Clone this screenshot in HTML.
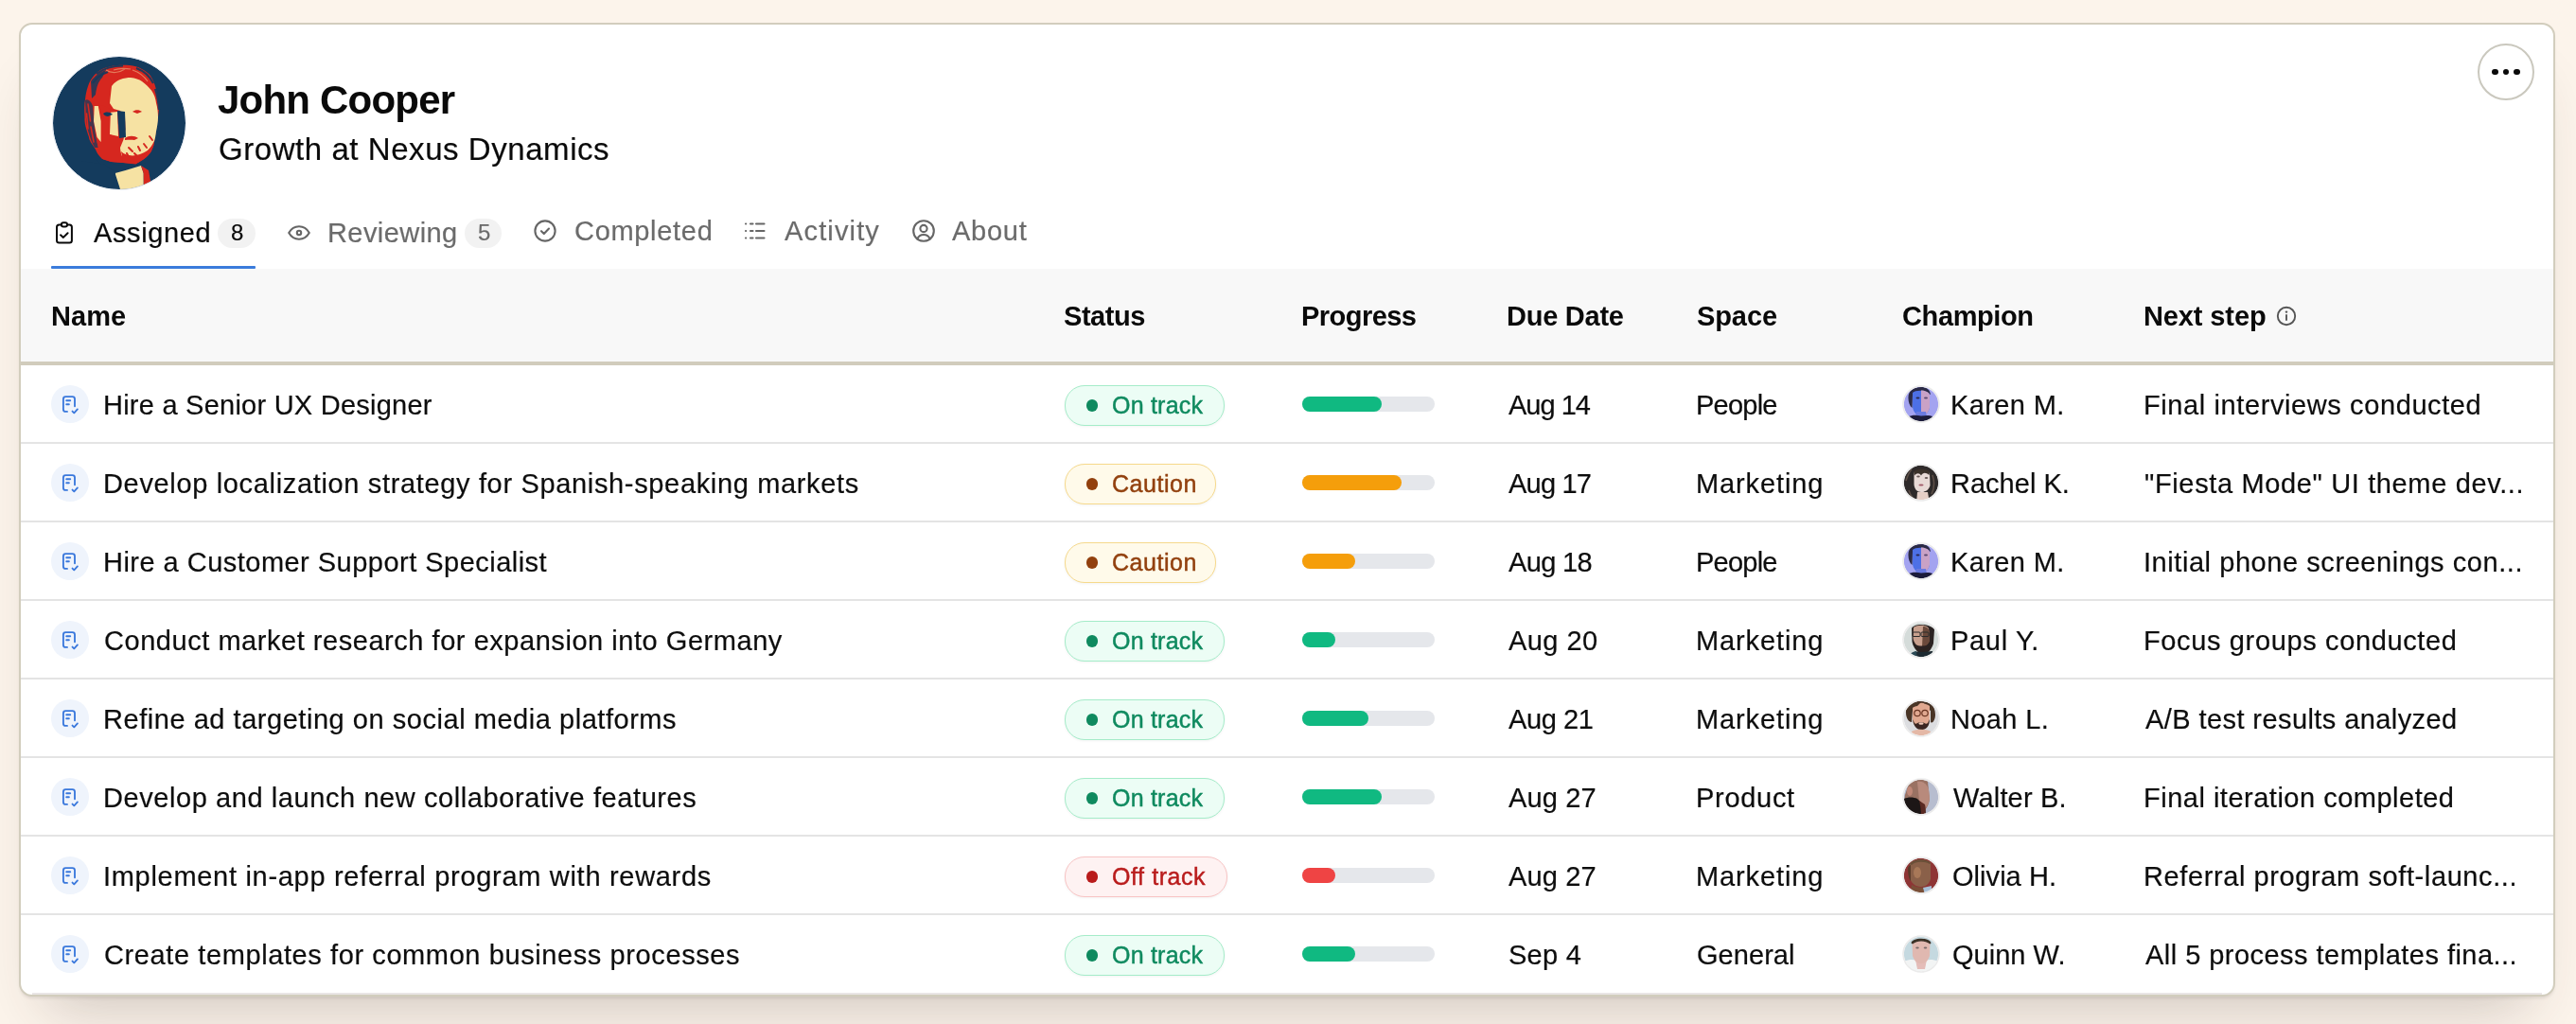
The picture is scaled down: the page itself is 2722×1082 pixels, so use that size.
<!DOCTYPE html>
<html><head><meta charset="utf-8"><style>
html,body{margin:0;padding:0;}
body{width:2722px;height:1082px;overflow:hidden;position:relative;background:#fcf4eb;font-family:"Liberation Sans",sans-serif;}
.card{position:absolute;left:20px;top:24px;width:2676px;height:1024.5px;border:2px solid #d2cdbd;border-radius:14px;background:#fff;box-shadow:0 40px 60px -30px rgba(60,40,40,0.24), 0 3px 3px -1px rgba(60,50,45,0.10);}
.t{position:absolute;white-space:nowrap;line-height:1;font-family:"Liberation Sans",sans-serif;-webkit-text-stroke:0.2px currentColor;will-change:transform;}
svg{overflow:visible;}
</style></head><body>
<div class="card"></div>
<svg style="position:absolute;left:56.00px;top:60.00px;" width="140" height="140" viewBox="0 0 140 140">
<defs><clipPath id="cav"><circle cx="70" cy="70" r="70"/></clipPath></defs>
<g clip-path="url(#cav)">
<rect width="140" height="140" fill="#143b5d"/>
<path d="M37 31 C40 22 46 16 52 13 C60 9 72 8 81 9 C90 10 98 14 103 20 C108 27 111 40 112 55 L111 64 L106.6 93 C104 100 100 105 98 106.6 L87.5 113.5 L74 112 L61.5 111 L52 108 C48 104 46 101 45 98 C41 92 38 88 38 85 C35 76 33 70 33.5 64 C33 56 33 50 34 45 C34.5 40 35.5 35 37 31 Z" fill="#d6271f"/>
<path d="M40 26 C44 20 50 16 56 14 L52 22 C48 26 46 32 45 40 L41 44 Z" fill="#143b5d" opacity="0.85"/>
<path d="M34 46 C36 44 40 46 42 52 L43.5 70 C44 80 46 88 48 96 L44 96 C40 88 36 78 35 66 Z" fill="#143b5d" opacity="0.75"/>
<path d="M37 50 L39.5 68 M40 74 L43 90 M35.5 60 L37 76" stroke="#d6271f" stroke-width="1.6" stroke-linecap="round"/>
<path d="M62 31 C65 27 68 25 71 24 C75 22.5 79 22 82 22 C87 22.5 91 24 94 26 C98 29 101 32 104 35.5 C107 40 108.5 44 109 49 C110.5 54 111 59 111 64 C111 69 110 74 109 79 C108.5 83 108 86 107 89 C105 93 103 96 101 98 C99 101 96.5 103 94 105 C91 107 88 108.5 85 109 C82 109 79.5 108.8 77 108 C75 107 73 105.5 72 104 C71 101 70.5 98 71 96 L74.5 87.5 L76.5 76.5 L76 64 L71 57 L64 55 L60 49 L61 40 Z" fill="#f6e2a3"/>
<path d="M59 59 L68 58 L69 84 L60 82 Z" fill="#f6e2a3"/>
<path d="M68 57 L76 58 L77 85 L70 86 Z" fill="#143b5d"/>
<path d="M45 52 C50 50 56 52 61 56 L60 82 L70 86 C71 95 71 100 73 106 L74 112 L61.5 111 L52 108 C48 100 46 90 45.5 80 C45 70 45 60 45 52 Z" fill="#d6271f"/>
<path d="M43.7 52 L47.8 52 L50.6 68 L50.6 90 L46.5 85 L43 68 Z" fill="#f6e2a3"/>
<path d="M53 60 C56 58 60 58 63 61 L58 63 C56 63 54 62 53 60 Z" fill="#143b5d"/>
<path d="M84 58 C87 55.5 91 55.5 94 58 L89 60 Z" fill="#d6271f"/>
<path d="M76 86 C80 83 86 83 90 86 L86 88 C83 87.5 80 87.5 76 88 Z" fill="#d6271f"/>
<path d="M72 100 C78 106 90 106 100 99 L106.6 93 L104 100 C100 106 92 112 86 113 L74 112 Z" fill="#d6271f"/>
<path d="M45 102.5 C52 110 62 114 74 115 C84 116 92 115 98 112 L98 118 C90 121 80 122 70 121 C58 120 50 114 45 108 Z" fill="#143b5d"/>
<path d="M65.6 123 L76.6 120 L93 115 L95.7 123 L95.7 140 L71 140 Z" fill="#f6e2a3"/>
<path d="M93 115 L101 120 L104 137 L96 140 L95.7 123 Z" fill="#d6271f"/>
<path d="M55 114 C60 118 64 121 66 123 L62 140 L30 140 L30 110 Z" fill="#143b5d"/>
<path d="M80 96 L84 100 M90 95 L92 99 M96 92 L99 96 M86 102 L89 105 M78 102 L80 106 M102 84 L105 88" stroke="#d6271f" stroke-width="2" stroke-linecap="round"/>
<path d="M46 18 C54 12 64 9.5 74 9.5 M88 12 C96 15 102 20 106 28 M42 28 C46 22 52 18 58 16 M108 34 C110 40 111.5 48 112 56" stroke="#143b5d" stroke-width="2.2" fill="none" opacity="0.9"/>
<path d="M56 14 C62 18 70 17 76 13 M84 14 C90 16 96 20 100 26 M64 14 C70 12 76 12 82 13" stroke="#f6e2a3" stroke-width="1.2" opacity="0.45" fill="none"/>
</g>

</svg>
<div style="position:absolute;left:55.00px;top:59.00px;width:142.00px;height:142.00px;box-sizing:border-box;border:1.5px solid #e3e8ef;border-radius:50%;"></div>
<div class="t" style="left:230.45px;top:84.85px;font-size:42px;letter-spacing:-0.790px;color:#0a0a0a;font-weight:700;-webkit-text-stroke:0;">John Cooper</div>
<div class="t" style="left:230.52px;top:140.82px;font-size:33px;letter-spacing:0.556px;color:#0a0a0a;">Growth at Nexus Dynamics</div>
<div style="position:absolute;left:2618.00px;top:46.00px;width:60.00px;height:60.00px;box-sizing:border-box;border:2px solid #cac8be;border-radius:50%;background:#fff;"></div>
<div style="position:absolute;left:2633.00px;top:72.50px;width:6.60px;height:6.60px;border-radius:50%;background:#0a0a0a;"></div>
<div style="position:absolute;left:2644.70px;top:72.50px;width:6.60px;height:6.60px;border-radius:50%;background:#0a0a0a;"></div>
<div style="position:absolute;left:2656.40px;top:72.50px;width:6.60px;height:6.60px;border-radius:50%;background:#0a0a0a;"></div>
<svg style="position:absolute;left:50.00px;top:220.00px;" width="60" height="50" viewBox="0 0 60 50"><g fill="none" stroke="#0a0a0a" stroke-width="2" stroke-linecap="round" stroke-linejoin="round">
<path d="M14.9 17.6 H12.5 a2.5 2.5 0 0 0 -2.5 2.5 V34.1 a2.5 2.5 0 0 0 2.5 2.5 H23.4 a2.5 2.5 0 0 0 2.5 -2.5 V20.1 a2.5 2.5 0 0 0 -2.5 -2.5 H21"/>
<rect x="14.9" y="15.2" width="6.1" height="4.3" rx="2"/>
<path d="M14 28.3 L16.9 30.9 L21.6 26.2"/></g></svg>
<div class="t" style="left:99.12px;top:231.75px;font-size:29px;letter-spacing:0.631px;color:#0a0a0a;">Assigned</div>
<div style="position:absolute;left:230.20px;top:231.00px;width:39.50px;height:30.70px;border-radius:16px;background:#f2f2f2;"></div>
<div class="t" style="left:244.20px;top:233.68px;font-size:24px;letter-spacing:0.000px;color:#0a0a0a;">8</div>
<svg style="position:absolute;left:302.00px;top:235.20px;" width="28" height="22" viewBox="0 0 28 22"><g fill="none" stroke="#666" stroke-width="2.1" stroke-linecap="round" stroke-linejoin="round">
<path d="M3.2 11 C6 6.2 10 4.3 14 4.3 C18 4.3 22 6.2 24.8 11 C22 15.8 18 17.7 14 17.7 C10 17.7 6 15.8 3.2 11 Z"/>
<circle cx="14" cy="11" r="2.2"/></g></svg>
<div class="t" style="left:345.60px;top:231.75px;font-size:29px;letter-spacing:0.430px;color:#6b6b6b;">Reviewing</div>
<div style="position:absolute;left:490.80px;top:231.00px;width:39.00px;height:30.70px;border-radius:16px;background:#f2f2f2;"></div>
<div class="t" style="left:504.50px;top:233.68px;font-size:24px;letter-spacing:0.000px;color:#6b6b6b;">5</div>
<svg style="position:absolute;left:562.00px;top:230.00px;" width="28" height="28" viewBox="0 0 28 28"><g fill="none" stroke="#666" stroke-width="2.1" stroke-linecap="round" stroke-linejoin="round">
<circle cx="14" cy="14" r="10.6"/><path d="M10 14.2 L12.8 17 L18 11.6"/></g></svg>
<div class="t" style="left:606.76px;top:229.55px;font-size:29px;letter-spacing:0.690px;color:#6b6b6b;">Completed</div>
<svg style="position:absolute;left:785.00px;top:233.00px;" width="26" height="22" viewBox="0 0 26 22"><g fill="none" stroke="#666" stroke-width="2.1" stroke-linecap="round">
<path d="M3 3.5 h0.2 M8 3.5 h2.5 M14 3.5 h8.5"/>
<path d="M3 11 h0.2 M8 11 h2.5 M14 11 h8.5"/>
<path d="M3 18.5 h0.2 M8 18.5 h2.5 M14 18.5 h8.5"/></g></svg>
<div class="t" style="left:828.78px;top:229.55px;font-size:29px;letter-spacing:1.143px;color:#6b6b6b;">Activity</div>
<svg style="position:absolute;left:962.00px;top:230.00px;" width="28" height="28" viewBox="0 0 28 28"><g fill="none" stroke="#666" stroke-width="2.1" stroke-linecap="round" stroke-linejoin="round">
<circle cx="14" cy="14" r="10.8"/><circle cx="14" cy="11.5" r="3.6"/><path d="M7.2 22.5 C8.5 19.5 11 18 14 18 C17 18 19.5 19.5 20.8 22.5"/></g></svg>
<div class="t" style="left:1006.44px;top:229.55px;font-size:29px;letter-spacing:0.725px;color:#6b6b6b;">About</div>
<div style="position:absolute;left:54.00px;top:281.00px;width:216.00px;height:3.20px;background:#3b7cdc;border-radius:1px;"></div>
<div style="position:absolute;left:22.00px;top:284.00px;width:2676.00px;height:98.00px;background:#f8f8f8;"></div>
<div style="position:absolute;left:22.00px;top:382.00px;width:2676.00px;height:4.00px;background:#d1ccbc;"></div>
<div class="t" style="left:54.00px;top:320.25px;font-size:29px;letter-spacing:0.067px;color:#0a0a0a;font-weight:700;-webkit-text-stroke:0;">Name</div>
<div class="t" style="left:1124.10px;top:320.25px;font-size:29px;letter-spacing:-0.460px;color:#0a0a0a;font-weight:700;-webkit-text-stroke:0;">Status</div>
<div class="t" style="left:1375.40px;top:320.25px;font-size:29px;letter-spacing:-0.543px;color:#0a0a0a;font-weight:700;-webkit-text-stroke:0;">Progress</div>
<div class="t" style="left:1592.40px;top:320.25px;font-size:29px;letter-spacing:-0.243px;color:#0a0a0a;font-weight:700;-webkit-text-stroke:0;">Due Date</div>
<div class="t" style="left:1792.70px;top:320.25px;font-size:29px;letter-spacing:-0.100px;color:#0a0a0a;font-weight:700;-webkit-text-stroke:0;">Space</div>
<div class="t" style="left:2010.20px;top:320.25px;font-size:29px;letter-spacing:-0.386px;color:#0a0a0a;font-weight:700;-webkit-text-stroke:0;">Champion</div>
<div class="t" style="left:2265.40px;top:320.25px;font-size:29px;letter-spacing:-0.112px;color:#0a0a0a;font-weight:700;-webkit-text-stroke:0;">Next step</div>
<svg style="position:absolute;left:2404.00px;top:322.00px;" width="24" height="24" viewBox="0 0 24 24"><g fill="none" stroke="#555" stroke-width="1.9" stroke-linecap="round">
<circle cx="12" cy="12" r="9.2"/><path d="M12 11 V16"/><path d="M12 7.6 h0.01" stroke-width="2.4"/></g></svg>
<div style="position:absolute;left:22.00px;top:467.00px;width:2676.00px;height:2.00px;background:#e4e4e4;"></div>
<div style="position:absolute;left:54.00px;top:406.80px;width:40.00px;height:40.00px;border-radius:50%;background:#eff4fc;"></div>
<svg style="position:absolute;left:60.00px;top:411.80px;" width="30" height="30" viewBox="0 0 30 30"><g fill="none" stroke="#3a78dc" stroke-width="1.85" stroke-linecap="round" stroke-linejoin="round">
<path d="M11 22.9 H9.4 a2.5 2.5 0 0 1 -2.5 -2.5 V9.6 a2.5 2.5 0 0 1 2.5 -2.5 H16.5 a2.5 2.5 0 0 1 2.5 2.5 V17.2"/>
<path d="M10.2 11.2 H14.2"/><path d="M10.2 15.2 H12.9"/><path d="M16.5 22.6 L18.3 24.3 L21.9 20.4"/></g></svg>
<div class="t" style="left:108.72px;top:413.75px;font-size:29px;letter-spacing:0.241px;color:#0d0d0d;">Hire a Senior UX Designer</div>
<div style="position:absolute;left:1124.50px;top:407.30px;width:169.00px;height:43.00px;box-sizing:border-box;border:1.6px solid #a5ecc9;border-radius:21px;background:#ecfdf5;box-shadow:0 1px 3px rgba(0,0,0,0.05);"></div>
<div style="position:absolute;left:1147.70px;top:422.20px;width:12.80px;height:12.80px;border-radius:50%;background:#0f8a5f;"></div>
<div class="t" style="left:1174.70px;top:415.74px;font-size:25px;letter-spacing:0.220px;color:#0f8a5f;-webkit-text-stroke:0.45px currentColor;">On track</div>
<div style="position:absolute;left:1376.00px;top:418.80px;width:140.00px;height:16.00px;border-radius:8px;background:#e5e7eb;"></div>
<div style="position:absolute;left:1376.00px;top:418.80px;width:84.00px;height:16.00px;border-radius:8px;background:#10b981;"></div>
<div class="t" style="left:1594.44px;top:413.75px;font-size:29px;letter-spacing:-0.988px;color:#0d0d0d;">Aug 14</div>
<div class="t" style="left:1791.60px;top:413.75px;font-size:29px;letter-spacing:-0.760px;color:#0d0d0d;">People</div>
<svg style="position:absolute;left:2008.00px;top:404.80px;" width="44" height="44" viewBox="0 0 44 44"><defs><clipPath id="ca0"><circle cx="22" cy="22" r="18.2"/></clipPath><filter id="fb0" x="-10%" y="-10%" width="120%" height="120%"><feGaussianBlur stdDeviation="0.55"/></filter></defs><g clip-path="url(#ca0)"><g filter="url(#fb0)"><rect width="44" height="44" fill="#a3a3f0"/>
<path d="M8.5 16 C8 8 14 4 22 4 C28 4 31.5 7 32 12 L30 11 C26 8 16 8 13 12 L12.5 26 C10 24 8.5 20 8.5 16 Z" fill="#2b2a45"/>
<path d="M13 10 C16 7 26 6.5 31 11 L31 26 C30 31 26 34 22 34 C17 34 13.5 30 13 25 Z" fill="#4d6fe6"/>
<path d="M22 7.5 C26 7.5 30 9 31 12 L31 26 C30 31 26 34 22 34 Z" fill="#c9a2c6"/>
<path d="M17 30 L27 30 L28 36 L16 36 Z" fill="#6a7ae0"/>
<ellipse cx="18.5" cy="15.5" rx="2" ry="1" fill="#2a2a50"/><ellipse cx="27" cy="15.5" rx="2" ry="1" fill="#5a4a70"/>
<path d="M8 35.5 C12 33.5 17 33.5 22 34.5 C27 34 31 33.5 35 35.5 L35 44 L8 44 Z" fill="#1e1c3a"/></g></g><circle cx="22" cy="22" r="19" fill="none" stroke="#ebebeb" stroke-width="1.6"/></svg>
<div class="t" style="left:2061.16px;top:413.75px;font-size:29px;letter-spacing:0.374px;color:#0d0d0d;">Karen M.</div>
<div class="t" style="left:2264.60px;top:413.75px;font-size:29px;letter-spacing:0.600px;color:#0d0d0d;">Final interviews conducted</div>
<div style="position:absolute;left:22.00px;top:550.00px;width:2676.00px;height:2.00px;background:#e4e4e4;"></div>
<div style="position:absolute;left:54.00px;top:489.80px;width:40.00px;height:40.00px;border-radius:50%;background:#eff4fc;"></div>
<svg style="position:absolute;left:60.00px;top:494.80px;" width="30" height="30" viewBox="0 0 30 30"><g fill="none" stroke="#3a78dc" stroke-width="1.85" stroke-linecap="round" stroke-linejoin="round">
<path d="M11 22.9 H9.4 a2.5 2.5 0 0 1 -2.5 -2.5 V9.6 a2.5 2.5 0 0 1 2.5 -2.5 H16.5 a2.5 2.5 0 0 1 2.5 2.5 V17.2"/>
<path d="M10.2 11.2 H14.2"/><path d="M10.2 15.2 H12.9"/><path d="M16.5 22.6 L18.3 24.3 L21.9 20.4"/></g></svg>
<div class="t" style="left:108.72px;top:496.75px;font-size:29px;letter-spacing:0.657px;color:#0d0d0d;">Develop localization strategy for Spanish-speaking markets</div>
<div style="position:absolute;left:1124.50px;top:490.30px;width:160.60px;height:43.00px;box-sizing:border-box;border:1.6px solid #f6d98c;border-radius:21px;background:#fffaea;box-shadow:0 1px 3px rgba(0,0,0,0.05);"></div>
<div style="position:absolute;left:1147.70px;top:505.20px;width:12.80px;height:12.80px;border-radius:50%;background:#92400e;"></div>
<div class="t" style="left:1174.70px;top:498.74px;font-size:25px;letter-spacing:0.537px;color:#92400e;-webkit-text-stroke:0.45px currentColor;">Caution</div>
<div style="position:absolute;left:1376.00px;top:501.80px;width:140.00px;height:16.00px;border-radius:8px;background:#e5e7eb;"></div>
<div style="position:absolute;left:1376.00px;top:501.80px;width:105.00px;height:16.00px;border-radius:8px;background:#f59e0b;"></div>
<div class="t" style="left:1594.44px;top:496.75px;font-size:29px;letter-spacing:-0.792px;color:#0d0d0d;">Aug 17</div>
<div class="t" style="left:1791.60px;top:496.75px;font-size:29px;letter-spacing:0.885px;color:#0d0d0d;">Marketing</div>
<svg style="position:absolute;left:2008.00px;top:487.80px;" width="44" height="44" viewBox="0 0 44 44"><defs><clipPath id="ca1"><circle cx="22" cy="22" r="18.2"/></clipPath><filter id="fb1" x="-10%" y="-10%" width="120%" height="120%"><feGaussianBlur stdDeviation="0.55"/></filter></defs><g clip-path="url(#ca1)"><g filter="url(#fb1)"><rect width="44" height="44" fill="#2f2b29"/>
<path d="M6 20 C8 14 10 10 12 8 M34 14 C36 20 36 28 33 34 M9 30 C10 34 12 37 14 39" stroke="#5e5048" stroke-width="1.5" fill="none"/>
<path d="M14.5 11 C16 8.5 28 8.5 31 12 L31.5 25 C30 30 26 32 22 32 C18 32 15 29 14.5 24 Z" fill="#e8dad6"/>
<path d="M14 10 C18 6.5 26 6.5 31 10 L30.5 14 C27 11 24 11 22 14.5 C20 11 17 12 15 14.5 Z" fill="#3a302c"/>
<ellipse cx="22" cy="24.5" rx="2.6" ry="1.1" fill="#a05a68"/>
<ellipse cx="19" cy="15.5" rx="1.8" ry="0.9" fill="#6a5a58"/><ellipse cx="27.5" cy="17" rx="1.8" ry="0.9" fill="#6a5a58"/>
<path d="M18 32 L29 32 L31 44 L17 44 Z" fill="#e5cfc6"/></g></g><circle cx="22" cy="22" r="19" fill="none" stroke="#ebebeb" stroke-width="1.6"/></svg>
<div class="t" style="left:2061.16px;top:496.75px;font-size:29px;letter-spacing:0.015px;color:#0d0d0d;">Rachel K.</div>
<div class="t" style="left:2266.20px;top:496.75px;font-size:29px;letter-spacing:0.639px;color:#0d0d0d;">&quot;Fiesta Mode&quot; UI theme dev...</div>
<div style="position:absolute;left:22.00px;top:633.00px;width:2676.00px;height:2.00px;background:#e4e4e4;"></div>
<div style="position:absolute;left:54.00px;top:572.80px;width:40.00px;height:40.00px;border-radius:50%;background:#eff4fc;"></div>
<svg style="position:absolute;left:60.00px;top:577.80px;" width="30" height="30" viewBox="0 0 30 30"><g fill="none" stroke="#3a78dc" stroke-width="1.85" stroke-linecap="round" stroke-linejoin="round">
<path d="M11 22.9 H9.4 a2.5 2.5 0 0 1 -2.5 -2.5 V9.6 a2.5 2.5 0 0 1 2.5 -2.5 H16.5 a2.5 2.5 0 0 1 2.5 2.5 V17.2"/>
<path d="M10.2 11.2 H14.2"/><path d="M10.2 15.2 H12.9"/><path d="M16.5 22.6 L18.3 24.3 L21.9 20.4"/></g></svg>
<div class="t" style="left:108.72px;top:579.75px;font-size:29px;letter-spacing:0.476px;color:#0d0d0d;">Hire a Customer Support Specialist</div>
<div style="position:absolute;left:1124.50px;top:573.30px;width:160.60px;height:43.00px;box-sizing:border-box;border:1.6px solid #f6d98c;border-radius:21px;background:#fffaea;box-shadow:0 1px 3px rgba(0,0,0,0.05);"></div>
<div style="position:absolute;left:1147.70px;top:588.20px;width:12.80px;height:12.80px;border-radius:50%;background:#92400e;"></div>
<div class="t" style="left:1174.70px;top:581.74px;font-size:25px;letter-spacing:0.537px;color:#92400e;-webkit-text-stroke:0.45px currentColor;">Caution</div>
<div style="position:absolute;left:1376.00px;top:584.80px;width:140.00px;height:16.00px;border-radius:8px;background:#e5e7eb;"></div>
<div style="position:absolute;left:1376.00px;top:584.80px;width:56.00px;height:16.00px;border-radius:8px;background:#f59e0b;"></div>
<div class="t" style="left:1594.44px;top:579.75px;font-size:29px;letter-spacing:-0.640px;color:#0d0d0d;">Aug 18</div>
<div class="t" style="left:1791.60px;top:579.75px;font-size:29px;letter-spacing:-0.760px;color:#0d0d0d;">People</div>
<svg style="position:absolute;left:2008.00px;top:570.80px;" width="44" height="44" viewBox="0 0 44 44"><defs><clipPath id="ca2"><circle cx="22" cy="22" r="18.2"/></clipPath><filter id="fb2" x="-10%" y="-10%" width="120%" height="120%"><feGaussianBlur stdDeviation="0.55"/></filter></defs><g clip-path="url(#ca2)"><g filter="url(#fb2)"><rect width="44" height="44" fill="#a3a3f0"/>
<path d="M8.5 16 C8 8 14 4 22 4 C28 4 31.5 7 32 12 L30 11 C26 8 16 8 13 12 L12.5 26 C10 24 8.5 20 8.5 16 Z" fill="#2b2a45"/>
<path d="M13 10 C16 7 26 6.5 31 11 L31 26 C30 31 26 34 22 34 C17 34 13.5 30 13 25 Z" fill="#4d6fe6"/>
<path d="M22 7.5 C26 7.5 30 9 31 12 L31 26 C30 31 26 34 22 34 Z" fill="#c9a2c6"/>
<path d="M17 30 L27 30 L28 36 L16 36 Z" fill="#6a7ae0"/>
<ellipse cx="18.5" cy="15.5" rx="2" ry="1" fill="#2a2a50"/><ellipse cx="27" cy="15.5" rx="2" ry="1" fill="#5a4a70"/>
<path d="M8 35.5 C12 33.5 17 33.5 22 34.5 C27 34 31 33.5 35 35.5 L35 44 L8 44 Z" fill="#1e1c3a"/></g></g><circle cx="22" cy="22" r="19" fill="none" stroke="#ebebeb" stroke-width="1.6"/></svg>
<div class="t" style="left:2061.16px;top:579.75px;font-size:29px;letter-spacing:0.374px;color:#0d0d0d;">Karen M.</div>
<div class="t" style="left:2264.60px;top:579.75px;font-size:29px;letter-spacing:0.560px;color:#0d0d0d;">Initial phone screenings con...</div>
<div style="position:absolute;left:22.00px;top:716.00px;width:2676.00px;height:2.00px;background:#e4e4e4;"></div>
<div style="position:absolute;left:54.00px;top:655.80px;width:40.00px;height:40.00px;border-radius:50%;background:#eff4fc;"></div>
<svg style="position:absolute;left:60.00px;top:660.80px;" width="30" height="30" viewBox="0 0 30 30"><g fill="none" stroke="#3a78dc" stroke-width="1.85" stroke-linecap="round" stroke-linejoin="round">
<path d="M11 22.9 H9.4 a2.5 2.5 0 0 1 -2.5 -2.5 V9.6 a2.5 2.5 0 0 1 2.5 -2.5 H16.5 a2.5 2.5 0 0 1 2.5 2.5 V17.2"/>
<path d="M10.2 11.2 H14.2"/><path d="M10.2 15.2 H12.9"/><path d="M16.5 22.6 L18.3 24.3 L21.9 20.4"/></g></svg>
<div class="t" style="left:109.52px;top:662.75px;font-size:29px;letter-spacing:0.540px;color:#0d0d0d;">Conduct market research for expansion into Germany</div>
<div style="position:absolute;left:1124.50px;top:656.30px;width:169.00px;height:43.00px;box-sizing:border-box;border:1.6px solid #a5ecc9;border-radius:21px;background:#ecfdf5;box-shadow:0 1px 3px rgba(0,0,0,0.05);"></div>
<div style="position:absolute;left:1147.70px;top:671.20px;width:12.80px;height:12.80px;border-radius:50%;background:#0f8a5f;"></div>
<div class="t" style="left:1174.70px;top:664.74px;font-size:25px;letter-spacing:0.220px;color:#0f8a5f;-webkit-text-stroke:0.45px currentColor;">On track</div>
<div style="position:absolute;left:1376.00px;top:667.80px;width:140.00px;height:16.00px;border-radius:8px;background:#e5e7eb;"></div>
<div style="position:absolute;left:1376.00px;top:667.80px;width:35.00px;height:16.00px;border-radius:8px;background:#10b981;"></div>
<div class="t" style="left:1594.44px;top:662.75px;font-size:29px;letter-spacing:0.436px;color:#0d0d0d;">Aug 20</div>
<div class="t" style="left:1791.60px;top:662.75px;font-size:29px;letter-spacing:0.885px;color:#0d0d0d;">Marketing</div>
<svg style="position:absolute;left:2008.00px;top:653.80px;" width="44" height="44" viewBox="0 0 44 44"><defs><clipPath id="ca3"><circle cx="22" cy="22" r="18.2"/></clipPath><filter id="fb3" x="-10%" y="-10%" width="120%" height="120%"><feGaussianBlur stdDeviation="0.55"/></filter></defs><g clip-path="url(#ca3)"><g filter="url(#fb3)"><rect width="44" height="44" fill="#d5dcda"/>
<path d="M12 10 C14 5 30 4 36 11 L35 26 C33 32 30 36 26 36 L20 36 C16 33 13 28 12.5 24 Z" fill="#2a2220"/>
<path d="M14 9 C18 6 28 6 30 10 L31 20 C30 26 27 30 22 30 C17 29 14 25 13.5 20 Z" fill="#c8a08e"/>
<path d="M24 8 C28 8 30 10 31 14 L31 24 C29 28 26 30 23 30 Z" fill="#6a4a3a"/>
<rect x="13" y="14" width="8" height="4.5" rx="1" fill="none" stroke="#2a2a2a" stroke-width="1"/><rect x="22" y="14" width="8" height="4.5" rx="1" fill="none" stroke="#2a2a2a" stroke-width="1"/>
<path d="M13 22 C15 30 19 33 23 33 C28 33 31 29 31 24 L29 27 C26 29 20 29 16 27 Z" fill="#2a2220"/>
<path d="M10 38 C14 34 18 34 22 35 L34 34 L36 44 L8 44 Z" fill="#1f2a30"/><path d="M10 38 C12 35 15 34 17 34 L18 44 L9 44 Z" fill="#2a4a55"/></g></g><circle cx="22" cy="22" r="19" fill="none" stroke="#ebebeb" stroke-width="1.6"/></svg>
<div class="t" style="left:2061.16px;top:662.75px;font-size:29px;letter-spacing:0.677px;color:#0d0d0d;">Paul Y.</div>
<div class="t" style="left:2264.60px;top:662.75px;font-size:29px;letter-spacing:0.637px;color:#0d0d0d;">Focus groups conducted</div>
<div style="position:absolute;left:22.00px;top:799.00px;width:2676.00px;height:2.00px;background:#e4e4e4;"></div>
<div style="position:absolute;left:54.00px;top:738.80px;width:40.00px;height:40.00px;border-radius:50%;background:#eff4fc;"></div>
<svg style="position:absolute;left:60.00px;top:743.80px;" width="30" height="30" viewBox="0 0 30 30"><g fill="none" stroke="#3a78dc" stroke-width="1.85" stroke-linecap="round" stroke-linejoin="round">
<path d="M11 22.9 H9.4 a2.5 2.5 0 0 1 -2.5 -2.5 V9.6 a2.5 2.5 0 0 1 2.5 -2.5 H16.5 a2.5 2.5 0 0 1 2.5 2.5 V17.2"/>
<path d="M10.2 11.2 H14.2"/><path d="M10.2 15.2 H12.9"/><path d="M16.5 22.6 L18.3 24.3 L21.9 20.4"/></g></svg>
<div class="t" style="left:108.72px;top:745.75px;font-size:29px;letter-spacing:0.537px;color:#0d0d0d;">Refine ad targeting on social media platforms</div>
<div style="position:absolute;left:1124.50px;top:739.30px;width:169.00px;height:43.00px;box-sizing:border-box;border:1.6px solid #a5ecc9;border-radius:21px;background:#ecfdf5;box-shadow:0 1px 3px rgba(0,0,0,0.05);"></div>
<div style="position:absolute;left:1147.70px;top:754.20px;width:12.80px;height:12.80px;border-radius:50%;background:#0f8a5f;"></div>
<div class="t" style="left:1174.70px;top:747.74px;font-size:25px;letter-spacing:0.220px;color:#0f8a5f;-webkit-text-stroke:0.45px currentColor;">On track</div>
<div style="position:absolute;left:1376.00px;top:750.80px;width:140.00px;height:16.00px;border-radius:8px;background:#e5e7eb;"></div>
<div style="position:absolute;left:1376.00px;top:750.80px;width:70.00px;height:16.00px;border-radius:8px;background:#10b981;"></div>
<div class="t" style="left:1594.44px;top:745.75px;font-size:29px;letter-spacing:-0.416px;color:#0d0d0d;">Aug 21</div>
<div class="t" style="left:1791.60px;top:745.75px;font-size:29px;letter-spacing:0.885px;color:#0d0d0d;">Marketing</div>
<svg style="position:absolute;left:2008.00px;top:736.80px;" width="44" height="44" viewBox="0 0 44 44"><defs><clipPath id="ca4"><circle cx="22" cy="22" r="18.2"/></clipPath><filter id="fb4" x="-10%" y="-10%" width="120%" height="120%"><feGaussianBlur stdDeviation="0.55"/></filter></defs><g clip-path="url(#ca4)"><g filter="url(#fb4)"><rect width="44" height="44" fill="#dcdde0"/>
<path d="M6 16 C5 6 15 3 22 4 C30 4 37 8 37 18 C37 24 34 28 32 26 L32 14 C28 10 16 10 13 14 L12 26 C9 26 6 22 6 16 Z" fill="#4a3428"/>
<path d="M13 8 C17 5 26 5 31 9 L31 24 C29 30 26 33 22 33 C18 33 14 30 13 24 Z" fill="#e0a890"/>
<path d="M13 7 C16 4 20 4 22 5 L18 9 C16 9 14 10 13 11 Z" fill="#4a3428"/>
<path d="M13 23 C14 31 18 34 22 34 C27 34 31 31 31 23 L29 27 C27 29 25 26 22 26 C19 26 16 29 15 27 Z" fill="#3a2820"/>
<circle cx="18" cy="16.5" r="3.2" fill="none" stroke="#6a3422" stroke-width="1.2"/><circle cx="26" cy="16.5" r="3.2" fill="none" stroke="#6a3422" stroke-width="1.2"/>
<ellipse cx="22" cy="27.5" rx="2.6" ry="1.2" fill="#f0c8b8"/>
<path d="M12 36 C16 33 28 33 32 36 L34 44 L10 44 Z" fill="#e4b8a6"/></g></g><circle cx="22" cy="22" r="19" fill="none" stroke="#ebebeb" stroke-width="1.6"/></svg>
<div class="t" style="left:2061.16px;top:745.75px;font-size:29px;letter-spacing:0.353px;color:#0d0d0d;">Noah L.</div>
<div class="t" style="left:2267.00px;top:745.75px;font-size:29px;letter-spacing:0.416px;color:#0d0d0d;">A/B test results analyzed</div>
<div style="position:absolute;left:22.00px;top:882.00px;width:2676.00px;height:2.00px;background:#e4e4e4;"></div>
<div style="position:absolute;left:54.00px;top:821.80px;width:40.00px;height:40.00px;border-radius:50%;background:#eff4fc;"></div>
<svg style="position:absolute;left:60.00px;top:826.80px;" width="30" height="30" viewBox="0 0 30 30"><g fill="none" stroke="#3a78dc" stroke-width="1.85" stroke-linecap="round" stroke-linejoin="round">
<path d="M11 22.9 H9.4 a2.5 2.5 0 0 1 -2.5 -2.5 V9.6 a2.5 2.5 0 0 1 2.5 -2.5 H16.5 a2.5 2.5 0 0 1 2.5 2.5 V17.2"/>
<path d="M10.2 11.2 H14.2"/><path d="M10.2 15.2 H12.9"/><path d="M16.5 22.6 L18.3 24.3 L21.9 20.4"/></g></svg>
<div class="t" style="left:108.72px;top:828.75px;font-size:29px;letter-spacing:0.579px;color:#0d0d0d;">Develop and launch new collaborative features</div>
<div style="position:absolute;left:1124.50px;top:822.30px;width:169.00px;height:43.00px;box-sizing:border-box;border:1.6px solid #a5ecc9;border-radius:21px;background:#ecfdf5;box-shadow:0 1px 3px rgba(0,0,0,0.05);"></div>
<div style="position:absolute;left:1147.70px;top:837.20px;width:12.80px;height:12.80px;border-radius:50%;background:#0f8a5f;"></div>
<div class="t" style="left:1174.70px;top:830.74px;font-size:25px;letter-spacing:0.220px;color:#0f8a5f;-webkit-text-stroke:0.45px currentColor;">On track</div>
<div style="position:absolute;left:1376.00px;top:833.80px;width:140.00px;height:16.00px;border-radius:8px;background:#e5e7eb;"></div>
<div style="position:absolute;left:1376.00px;top:833.80px;width:84.00px;height:16.00px;border-radius:8px;background:#10b981;"></div>
<div class="t" style="left:1594.44px;top:828.75px;font-size:29px;letter-spacing:0.160px;color:#0d0d0d;">Aug 27</div>
<div class="t" style="left:1791.60px;top:828.75px;font-size:29px;letter-spacing:0.703px;color:#0d0d0d;">Product</div>
<svg style="position:absolute;left:2008.00px;top:819.80px;" width="44" height="44" viewBox="0 0 44 44"><defs><clipPath id="ca5"><circle cx="22" cy="22" r="18.2"/></clipPath><filter id="fb5" x="-10%" y="-10%" width="120%" height="120%"><feGaussianBlur stdDeviation="0.55"/></filter></defs><g clip-path="url(#ca5)"><g filter="url(#fb5)"><rect width="44" height="44" fill="#b7bdcf"/>
<path d="M9 8 C14 3 26 3 29 6 L31 24 C30 32 26 38 20 40 L8 40 C5 34 4 26 5 20 Z" fill="#9a7264"/>
<path d="M18 6 C24 5 28 8 30 14 L31 24 C30 30 27 34 24 36 L20 26 Z" fill="#b88a7c"/>
<ellipse cx="10" cy="16" rx="3" ry="5" fill="#c08878"/>
<path d="M4 24 C8 22 14 22 18 24 L24 30 C26 34 28 38 26 44 L4 44 Z" fill="#1e1614"/>
<path d="M20 26 L26 30 C27 34 27 38 26 42 L22 42 C22 36 21 30 20 26 Z" fill="#5a2a20"/></g></g><circle cx="22" cy="22" r="19" fill="none" stroke="#ebebeb" stroke-width="1.6"/></svg>
<div class="t" style="left:2063.56px;top:828.75px;font-size:29px;letter-spacing:0.175px;color:#0d0d0d;">Walter B.</div>
<div class="t" style="left:2264.60px;top:828.75px;font-size:29px;letter-spacing:0.500px;color:#0d0d0d;">Final iteration completed</div>
<div style="position:absolute;left:22.00px;top:965.00px;width:2676.00px;height:2.00px;background:#e4e4e4;"></div>
<div style="position:absolute;left:54.00px;top:904.80px;width:40.00px;height:40.00px;border-radius:50%;background:#eff4fc;"></div>
<svg style="position:absolute;left:60.00px;top:909.80px;" width="30" height="30" viewBox="0 0 30 30"><g fill="none" stroke="#3a78dc" stroke-width="1.85" stroke-linecap="round" stroke-linejoin="round">
<path d="M11 22.9 H9.4 a2.5 2.5 0 0 1 -2.5 -2.5 V9.6 a2.5 2.5 0 0 1 2.5 -2.5 H16.5 a2.5 2.5 0 0 1 2.5 2.5 V17.2"/>
<path d="M10.2 11.2 H14.2"/><path d="M10.2 15.2 H12.9"/><path d="M16.5 22.6 L18.3 24.3 L21.9 20.4"/></g></svg>
<div class="t" style="left:108.72px;top:911.75px;font-size:29px;letter-spacing:0.699px;color:#0d0d0d;">Implement in-app referral program with rewards</div>
<div style="position:absolute;left:1124.50px;top:905.30px;width:172.00px;height:43.00px;box-sizing:border-box;border:1.6px solid #f8c4c4;border-radius:21px;background:#fef2f2;box-shadow:0 1px 3px rgba(0,0,0,0.05);"></div>
<div style="position:absolute;left:1147.70px;top:920.20px;width:12.80px;height:12.80px;border-radius:50%;background:#b91c1c;"></div>
<div class="t" style="left:1174.70px;top:913.74px;font-size:25px;letter-spacing:0.575px;color:#b91c1c;-webkit-text-stroke:0.45px currentColor;">Off track</div>
<div style="position:absolute;left:1376.00px;top:916.80px;width:140.00px;height:16.00px;border-radius:8px;background:#e5e7eb;"></div>
<div style="position:absolute;left:1376.00px;top:916.80px;width:35.00px;height:16.00px;border-radius:8px;background:#ef4444;"></div>
<div class="t" style="left:1594.44px;top:911.75px;font-size:29px;letter-spacing:0.160px;color:#0d0d0d;">Aug 27</div>
<div class="t" style="left:1791.60px;top:911.75px;font-size:29px;letter-spacing:0.885px;color:#0d0d0d;">Marketing</div>
<svg style="position:absolute;left:2008.00px;top:902.80px;" width="44" height="44" viewBox="0 0 44 44"><defs><clipPath id="ca6"><circle cx="22" cy="22" r="18.2"/></clipPath><filter id="fb6" x="-10%" y="-10%" width="120%" height="120%"><feGaussianBlur stdDeviation="0.55"/></filter></defs><g clip-path="url(#ca6)"><g filter="url(#fb6)"><rect width="44" height="44" fill="#8e3436"/>
<path d="M10 10 C14 4 28 4 32 9 L32 26 C30 32 26 34 22 34 C16 34 11 30 10 24 Z" fill="#8a6048"/>
<ellipse cx="18" cy="19" rx="4" ry="6" fill="#a87858"/>
<path d="M10 10 C14 4 28 4 32 9 L31 10 C26 7 16 7 12 11 Z" fill="#6a5038"/>
<path d="M8 14 C9 12 10 11 11 11 L11 28 C9 26 8 20 8 14 Z" fill="#5a3a2a"/>
<path d="M12 32 C16 34 22 36 26 34 L27 44 L10 44 Z" fill="#7a5038"/>
<path d="M24 35 L33 33 L33 40 L26 42 Z" fill="#a8c0d8"/></g></g><circle cx="22" cy="22" r="19" fill="none" stroke="#ebebeb" stroke-width="1.6"/></svg>
<div class="t" style="left:2062.76px;top:911.75px;font-size:29px;letter-spacing:0.047px;color:#0d0d0d;">Olivia H.</div>
<div class="t" style="left:2264.60px;top:911.75px;font-size:29px;letter-spacing:0.601px;color:#0d0d0d;">Referral program soft-launc...</div>
<div style="position:absolute;left:34.00px;top:1048.50px;width:2652.00px;height:2.00px;background:#e9e6e6;"></div>
<div style="position:absolute;left:54.00px;top:987.80px;width:40.00px;height:40.00px;border-radius:50%;background:#eff4fc;"></div>
<svg style="position:absolute;left:60.00px;top:992.80px;" width="30" height="30" viewBox="0 0 30 30"><g fill="none" stroke="#3a78dc" stroke-width="1.85" stroke-linecap="round" stroke-linejoin="round">
<path d="M11 22.9 H9.4 a2.5 2.5 0 0 1 -2.5 -2.5 V9.6 a2.5 2.5 0 0 1 2.5 -2.5 H16.5 a2.5 2.5 0 0 1 2.5 2.5 V17.2"/>
<path d="M10.2 11.2 H14.2"/><path d="M10.2 15.2 H12.9"/><path d="M16.5 22.6 L18.3 24.3 L21.9 20.4"/></g></svg>
<div class="t" style="left:109.52px;top:994.75px;font-size:29px;letter-spacing:0.596px;color:#0d0d0d;">Create templates for common business processes</div>
<div style="position:absolute;left:1124.50px;top:988.30px;width:169.00px;height:43.00px;box-sizing:border-box;border:1.6px solid #a5ecc9;border-radius:21px;background:#ecfdf5;box-shadow:0 1px 3px rgba(0,0,0,0.05);"></div>
<div style="position:absolute;left:1147.70px;top:1003.20px;width:12.80px;height:12.80px;border-radius:50%;background:#0f8a5f;"></div>
<div class="t" style="left:1174.70px;top:996.74px;font-size:25px;letter-spacing:0.220px;color:#0f8a5f;-webkit-text-stroke:0.45px currentColor;">On track</div>
<div style="position:absolute;left:1376.00px;top:999.80px;width:140.00px;height:16.00px;border-radius:8px;background:#e5e7eb;"></div>
<div style="position:absolute;left:1376.00px;top:999.80px;width:56.00px;height:16.00px;border-radius:8px;background:#10b981;"></div>
<div class="t" style="left:1593.64px;top:994.75px;font-size:29px;letter-spacing:0.275px;color:#0d0d0d;">Sep 4</div>
<div class="t" style="left:1793.20px;top:994.75px;font-size:29px;letter-spacing:0.047px;color:#0d0d0d;">General</div>
<svg style="position:absolute;left:2008.00px;top:985.80px;" width="44" height="44" viewBox="0 0 44 44"><defs><clipPath id="ca7"><circle cx="22" cy="22" r="18.2"/></clipPath><filter id="fb7" x="-10%" y="-10%" width="120%" height="120%"><feGaussianBlur stdDeviation="0.55"/></filter></defs><g clip-path="url(#ca7)"><g filter="url(#fb7)"><rect width="44" height="44" fill="#c5d9e0"/>
<path d="M4 30 C10 27 16 28 22 30 C28 28 34 27 40 30 L40 44 L4 44 Z" fill="#f2f4f4"/>
<path d="M16 28 L28 28 L26 38 L18 38 Z" fill="#e4bcb8"/>
<path d="M12.5 9 C16 5 28 5 31.5 9 L31 24 C29 30 26 32 22 32 C18 32 15 30 13 24 Z" fill="#e0b8b0"/>
<path d="M11.5 10.5 C12 4 32 4 32.5 10.5 L31.5 11.5 C26 7.5 18 7.5 13 11.5 Z" fill="#3a3028"/>
<ellipse cx="18" cy="15.5" rx="1.8" ry="0.9" fill="#7a6a6a"/><ellipse cx="26.5" cy="15.5" rx="1.8" ry="0.9" fill="#7a6a6a"/></g></g><circle cx="22" cy="22" r="19" fill="none" stroke="#ebebeb" stroke-width="1.6"/></svg>
<div class="t" style="left:2062.76px;top:994.75px;font-size:29px;letter-spacing:0.029px;color:#0d0d0d;">Quinn W.</div>
<div class="t" style="left:2267.00px;top:994.75px;font-size:29px;letter-spacing:0.461px;color:#0d0d0d;">All 5 process templates fina...</div>
</body></html>
